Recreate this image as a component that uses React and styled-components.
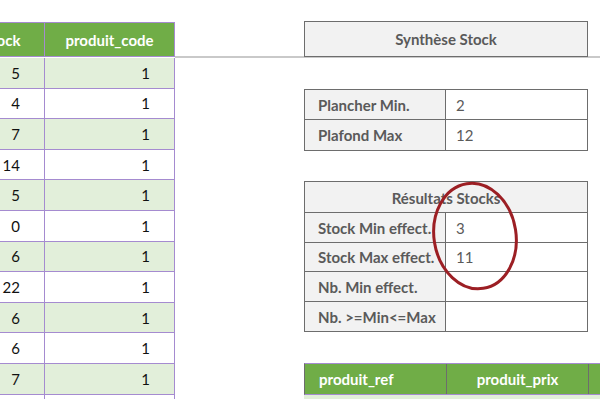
import React from "react";
import styled, { createGlobalStyle } from "styled-components";

const Global = createGlobalStyle`
  html, body { margin: 0; padding: 0; background: #ffffff; }
  body { font-family: Lato, "Open Sans", "Liberation Sans", sans-serif; overflow: hidden; }
  * { box-sizing: border-box; }
`;

const ROW = 30.6;
const GREEN = "#70ad47";
const LIGHT = "#e2efda";
const LAVENDER = "#a58bd0";
const DARK = "#6d6d6d";
const TEXT = "#5a5a5a";

const Sheet = styled.div`
  position: relative;
  width: 600px;
  height: 399px;
  overflow: hidden;
  display: flex;
  flex-direction: column;
  font-size: 15px;
`;

const FrozenBand = styled.div`
  display: flex;
  height: 58px;
  flex-shrink: 0;
`;

const LeftHeader = styled.div`
  display: flex;
  width: 175px;
  margin-top: 22px;
  height: 35px;
  background: ${GREEN};
  border-top: 1px solid ${LAVENDER};
  border-bottom: 1px solid ${LAVENDER};
  border-right: 1px solid ${LAVENDER};
`;

const HeadCell = styled.div`
  display: flex;
  align-items: center;
  justify-content: ${(p) => (p.$align === "left" ? "flex-start" : "center")};
  padding-left: ${(p) => (p.$align === "left" ? "14px" : `${p.$pl || 0}px`)};
  width: ${(p) => p.$w}px;
  flex-shrink: 0;
  margin-left: ${(p) => p.$ml || 0}px;
  color: #ffffff;
  font-weight: 700;
  border-right: ${(p) => (p.$last ? "none" : `1px solid ${p.$line || LAVENDER}`)};
  white-space: nowrap;
`;

const BandRight = styled.div`
  flex: 1;
  padding-left: 129px;
  padding-top: 21px;
  border-bottom: 2px solid #c9c9c9;
`;

const TitleBox = styled.div`
  width: 284px;
  height: 36px;
  background: #f2f2f2;
  border: 1px solid ${DARK};
  display: flex;
  align-items: center;
  justify-content: center;
  color: ${TEXT};
  font-weight: 700;
`;

const Body = styled.div`
  display: flex;
  flex: 1;
  min-height: 0;
`;

const LeftBody = styled.div`
  width: 175px;
  flex-shrink: 0;
  display: flex;
  flex-direction: column;
`;

const DataRow = styled.div`
  display: flex;
  height: ${ROW}px;
  flex-shrink: 0;
  background: ${(p) => (p.$shade ? LIGHT : "#ffffff")};
  border-bottom: 1px solid ${LAVENDER};
  border-right: 1px solid ${LAVENDER};
`;

const NumCell = styled.div`
  display: flex;
  align-items: center;
  justify-content: flex-end;
  padding-right: 24px;
  width: ${(p) => p.$w}px;
  margin-left: ${(p) => p.$ml || 0}px;
  flex-shrink: 0;
  color: #111111;
  border-right: ${(p) => (p.$last ? "none" : `1px solid ${LAVENDER}`)};
`;

const RightBody = styled.div`
  flex: 1;
  padding-left: 129px;
  display: flex;
  flex-direction: column;
`;

const Gap = styled.div`
  height: ${ROW}px;
  flex-shrink: 0;
`;

const Box = styled.div`
  width: 284px;
  border: 1px solid ${DARK};
  display: flex;
  flex-direction: column;
  flex-shrink: 0;
`;

const BoxRow = styled.div`
  display: flex;
  height: ${ROW}px;
  border-top: ${(p) => (p.$first ? "none" : `1px solid ${DARK}`)};
  margin-top: ${(p) => (p.$first ? 0 : -1)}px;
  flex-shrink: 0;
`;

const BoxHead = styled.div`
  flex: 1;
  display: flex;
  align-items: center;
  justify-content: center;
  background: #f2f2f2;
  color: ${TEXT};
  font-weight: 700;
`;

const Label = styled.div`
  width: 141px;
  display: flex;
  align-items: center;
  padding-left: 13px;
  background: #f2f2f2;
  color: ${TEXT};
  font-weight: 700;
  border-right: 1px solid ${DARK};
  white-space: nowrap;
`;

const Value = styled.div`
  flex: 1;
  display: flex;
  align-items: center;
  padding-left: 10px;
  background: #ffffff;
  color: ${TEXT};
`;

const GreenHead = styled.div`
  display: flex;
  width: 310px;
  height: ${ROW + 1}px;
  background: ${GREEN};
  border-top: 1px solid ${LAVENDER};
  border-left: 1px solid ${DARK};
  border-bottom: 1px solid ${LAVENDER};
  flex-shrink: 0;
`;

const GreenRow = styled.div`
  width: 310px;
  height: ${ROW}px;
  background: ${LIGHT};
  flex-shrink: 0;
`;

const Mark = styled.svg`
  position: absolute;
  left: 428px;
  top: 179px;
  pointer-events: none;
`;

const stock = [5, 4, 7, 14, 5, 0, 6, 22, 6, 6, 7, ""];

export default function App() {
  return (
    <>
      <Global />
      <Sheet>
        <FrozenBand>
          <LeftHeader>
            <HeadCell $w={92} $ml={-47} $pl={8}>stock</HeadCell>
            <HeadCell $w={129} $last>produit_code</HeadCell>
          </LeftHeader>
          <BandRight>
            <TitleBox>Synthèse Stock</TitleBox>
          </BandRight>
        </FrozenBand>
        <Body>
          <LeftBody>
            {stock.map((v, i) => (
              <DataRow key={i} $shade={i % 2 === 0}>
                <NumCell $w={92} $ml={-47}>{v}</NumCell>
                <NumCell $w={129} $last>{v === "" ? "" : 1}</NumCell>
              </DataRow>
            ))}
          </LeftBody>
          <RightBody>
            <Gap />
            <Box>
              <BoxRow $first>
                <Label>Plancher Min.</Label>
                <Value>2</Value>
              </BoxRow>
              <BoxRow>
                <Label>Plafond Max</Label>
                <Value>12</Value>
              </BoxRow>
            </Box>
            <Gap />
            <Box>
              <BoxRow $first>
                <BoxHead>Résultats Stocks</BoxHead>
              </BoxRow>
              <BoxRow>
                <Label>Stock Min effect.</Label>
                <Value>3</Value>
              </BoxRow>
              <BoxRow>
                <Label>Stock Max effect.</Label>
                <Value>11</Value>
              </BoxRow>
              <BoxRow>
                <Label>Nb. Min effect.</Label>
                <Value />
              </BoxRow>
              <BoxRow>
                <Label>Nb. &gt;=Min&lt;=Max</Label>
                <Value />
              </BoxRow>
            </Box>
            <Gap />
            <GreenHead>
              <HeadCell $w={142} $align="left" $line={DARK}>produit_ref</HeadCell>
              <HeadCell $w={142} $line={DARK}>produit_prix</HeadCell>
              <HeadCell $w={26} $last />
            </GreenHead>
            <GreenRow />
          </RightBody>
        </Body>
        <Mark width="94" height="116" viewBox="0 0 94 116">
          <ellipse
            cx="47"
            cy="57"
            rx="41"
            ry="53"
            transform="rotate(-9 47 57)"
            fill="none"
            stroke="#9c1f24"
            strokeWidth="3"
          />
        </Mark>
      </Sheet>
    </>
  );
}
